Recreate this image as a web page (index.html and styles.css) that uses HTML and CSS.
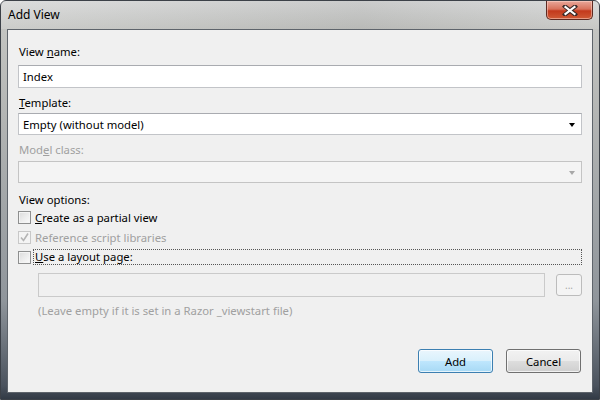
FILE: index.html
```html
<!DOCTYPE html>
<html>
<head>
<meta charset="utf-8">
<link rel="stylesheet" href="styles.css">
</head>
<body>
<div class="window">
  <div class="titlebar">
    <span class="title">Add View</span>
    <div class="close">
      <svg width="16" height="11" viewBox="0 0 16 11"><path d="M3 1.5 L13 9.5 M13 1.5 L3 9.5" stroke="#3a2a28" stroke-width="4.2" stroke-linecap="square"/><path d="M3.5 2 L12.5 9 M12.5 2 L3.5 9" stroke="#ffffff" stroke-width="2.2" stroke-linecap="square"/></svg>
    </div>
  </div>
  <div class="client">
    <div class="label l1">View <u>n</u>ame:</div>
    <div class="textbox">Index</div>
    <div class="label l2"><u>T</u>emplate:</div>
    <div class="combo">
      <span>Empty (without model)</span>
      <span class="arrow"></span>
    </div>
    <div class="label l3 disabled">Mod<u>e</u>l class:</div>
    <div class="combo combo-disabled">
      <span></span>
      <span class="arrow"></span>
    </div>
    <div class="label l4">View options:</div>
    <div class="check-row">
      <span class="box"></span><span><u>C</u>reate as a partial view</span>
    </div>
    <div class="check-row disabled">
      <span class="box checked"><svg width="11" height="11" viewBox="0 0 11 11"><path d="M2 5.5 L4.5 8.5 L9 1.5" fill="none" stroke="#b4b4b4" stroke-width="1.6"/></svg></span><span>Reference script libraries</span>
    </div>
    <div class="check-row focus-row">
      <span class="box"></span><span class="focus"><u>U</u>se a layout page:</span>
    </div>
    <div class="layout-row">
      <div class="textbox tb-disabled"></div>
      <div class="browse">...</div>
    </div>
    <div class="hint">(Leave empty if it is set in a Razor _viewstart file)</div>
    <div class="buttons">
      <div class="btn btn-default">Add</div>
      <div class="btn">Cancel</div>
    </div>
  </div>
</div>
</body>
</html>
```
FILE: styles.css
```css
html, body {
  margin: 0;
  padding: 0;
  background: #ffffff;
}
body {
  font-family: "Segoe UI", "Noto Sans", "Open Sans", sans-serif;
  font-size: 11.3px;
  color: #000;
}
.window {
  width: 600px;
  height: 400px;
  box-sizing: border-box;
  border: 1px solid #3c4148;
  border-radius: 6px 6px 0 0;
  background: linear-gradient(to bottom, #d6d7d7 0px, #c3c4c1 28px, #b2b4b3 120px, #8f959b 300px, #4a525d 385px, #2f3742 400px);
  display: flex;
  flex-direction: column;
  padding: 0 6px 6px 6px;
}
.titlebar {
  height: 28px;
  display: flex;
  align-items: flex-start;
  justify-content: space-between;
  background: linear-gradient(to right, rgba(255,255,255,0.15), rgba(0,0,0,0.05) 60%, rgba(255,255,255,0.08));
  margin: 0 -6px;
  padding: 0 6px 0 7px;
}
.title {
  margin-top: 5px;
  font-size: 12px;
  color: #000;
}
.close {
  width: 45px;
  height: 18px;
  border: 1px solid #5d2a22;
  border-top: none;
  border-radius: 0 0 5px 5px;
  background: linear-gradient(to bottom, #e9a89a 0%, #d8725c 45%, #c3391c 55%, #cf5a36 100%);
  box-shadow: inset 0 0 0 1px rgba(255,220,210,0.5);
  display: flex;
  align-items: center;
  justify-content: center;
}
.client {
  flex: 1;
  border: 1px solid #5e646b;
  background: #f0f0f0;
  padding: 14px 10px 0 10px;
  display: flex;
  flex-direction: column;
}
.label {
  line-height: 15px;
  padding-left: 1px;
}
.disabled {
  color: #a0a0a0;
}
.textbox {
  margin-top: 6px;
  height: 23px;
  box-sizing: border-box;
  background: #fff;
  border: 1px solid #c2c4c8;
  border-top-color: #a9abb0;
  padding: 3px 4px;
  line-height: 15px;
}
.l2 { margin-top: 7px; }
.combo {
  margin-top: 3px;
  height: 22px;
  box-sizing: border-box;
  background: #fff;
  border: 1px solid #c2c4c8;
  border-top-color: #a9abb0;
  display: flex;
  align-items: center;
  justify-content: space-between;
  padding: 0 6px 0 4px;
}
.arrow {
  width: 0;
  height: 0;
  border-left: 3.5px solid transparent;
  border-right: 3.5px solid transparent;
  border-top: 4px solid #000;
  margin-top: 1px;
}
.l3 { margin-top: 7px; }
.combo-disabled {
  margin-top: 4px;
  background: #f4f4f4;
  border-color: #c4c4c4;
}
.combo-disabled .arrow {
  border-top-color: #a8a8a8;
}
.l4 { margin-top: 9px; }
.check-row {
  height: 20px;
  display: flex;
  align-items: center;
  gap: 4px;
}
.box {
  width: 13px;
  height: 13px;
  box-sizing: border-box;
  border: 1px solid #8e8f8f;
  background: linear-gradient(135deg, #dcdcdc, #fbfbfb);
  box-shadow: inset 0 0 0 1px #f4f4f4;
  display: flex;
  align-items: center;
  justify-content: center;
}
.box.checked {
  border-color: #c8c8c8;
  background: #f4f4f4;
  box-shadow: none;
}
.focus-row .focus {
  flex: 1;
  border: 1px dotted #555;
  margin-left: -2px;
  padding-left: 1px;
  line-height: 14px;
}
.layout-row {
  margin-top: 6px;
  padding-left: 20px;
  display: flex;
  gap: 11px;
  align-items: center;
}
.layout-row .textbox {
  flex: 1;
  margin-top: 0;
  height: 24px;
}
.tb-disabled {
  background: #f0f0f0;
  border-color: #cacaca;
}
.browse {
  width: 26px;
  height: 22px;
  box-sizing: border-box;
  border: 1px solid #bcbcbc;
  border-radius: 3px;
  background: #f4f4f4;
  color: #a8a8a8;
  font-size: 10px;
  display: flex;
  align-items: center;
  justify-content: center;
  line-height: 10px;
}
.hint {
  margin-top: 6px;
  padding-left: 20px;
  color: #a0a0a0;
  line-height: 15px;
}
.buttons {
  margin-top: 31px;
  display: flex;
  justify-content: flex-end;
  gap: 13px;
  padding-right: 1px;
}
.btn {
  width: 75px;
  height: 24px;
  box-sizing: border-box;
  border: 1px solid #707070;
  border-radius: 3px;
  background: linear-gradient(to bottom, #f2f2f2 0%, #ebebeb 48%, #dddddd 52%, #cfcfcf 100%);
  box-shadow: inset 0 0 0 1px rgba(255,255,255,0.7);
  display: flex;
  align-items: center;
  justify-content: center;
}
.btn-default {
  border-color: #3c7fb1;
  background: linear-gradient(to bottom, #eaf6fd 0%, #d9f0fc 48%, #bee6fd 52%, #a7d9f5 100%);
}
```
